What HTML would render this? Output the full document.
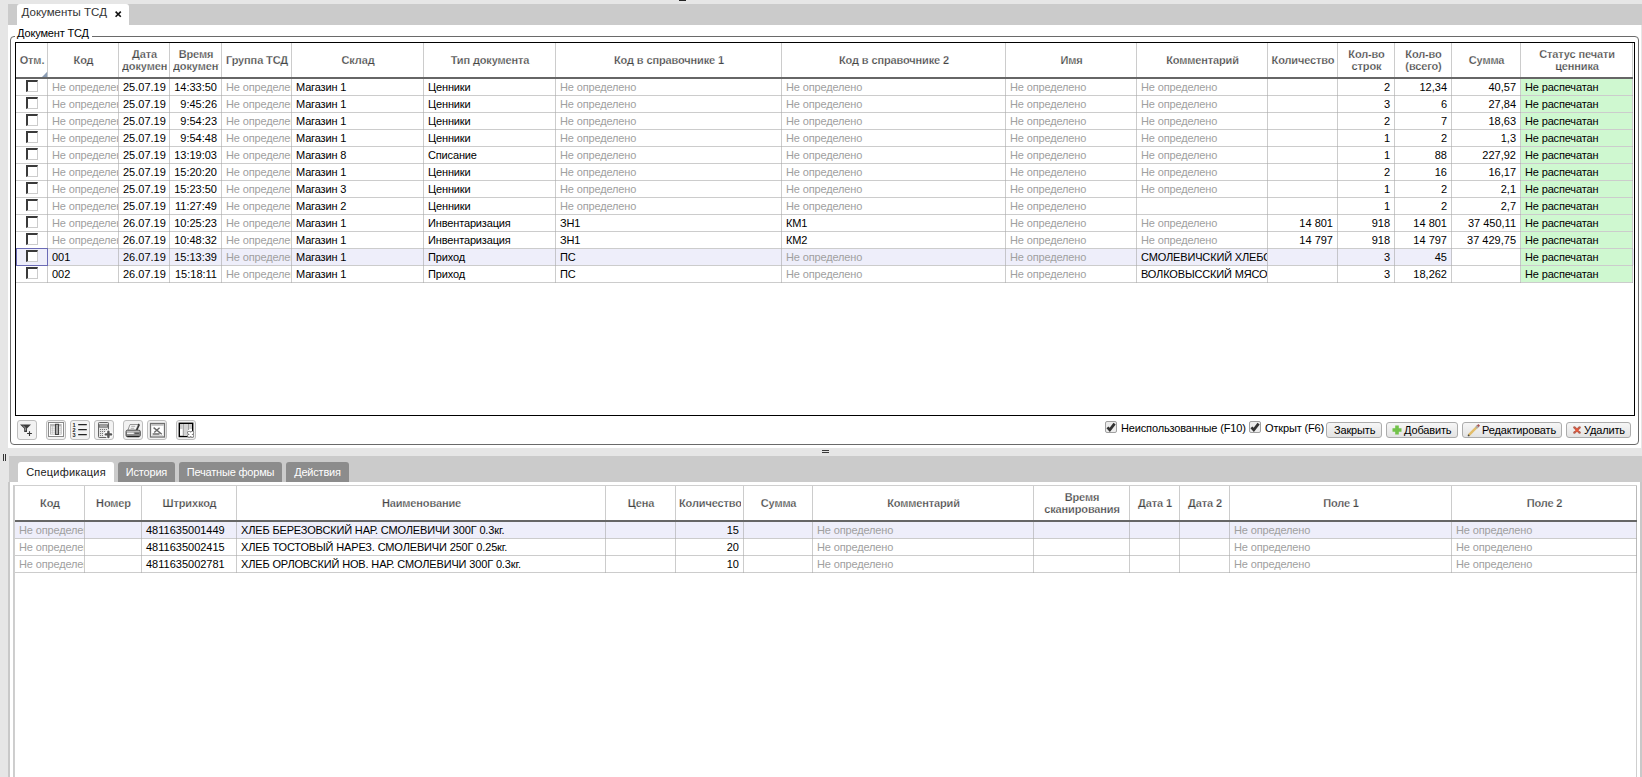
<!DOCTYPE html><html><head><meta charset="utf-8"><style>
*{box-sizing:content-box}
html,body{margin:0;padding:0}
body{width:1642px;height:777px;overflow:hidden;position:relative;background:#e6e6e6;font-family:"Liberation Sans",sans-serif;font-size:11px;color:#000;letter-spacing:-0.15px}
div{position:absolute}
.box{background:transparent}
.c{height:16px;line-height:16px;white-space:nowrap;overflow:hidden;padding:0 4px 0 4px;box-sizing:border-box;letter-spacing:-0.15px}
.c.r{text-align:right}
.hd{display:flex;align-items:center;justify-content:center;overflow:hidden}
.hdi{position:static;font-weight:bold;color:#444;-webkit-text-stroke:0.25px #fff;letter-spacing:-0.13px;text-align:center;line-height:12px;white-space:nowrap;margin-left:3px;margin-right:2px;overflow:hidden}
.hl1{position:static;overflow:hidden}
.chk{width:10px;height:10px;border-top:2px solid #3a3a3a;border-left:2px solid #3a3a3a;border-right:1px solid #ccc;border-bottom:1px solid #ccc;background:#fff;box-sizing:content-box;width:9px;height:9px}
.tbtn{width:18px;height:18px;border:1px solid #bdbdbd;border-radius:3px;background:#f2f2f2}
.btn{height:14px;border:1px solid #acacac;border-radius:3px;background:linear-gradient(#f6f6f6,#e3e3e3);line-height:14px;white-space:nowrap}
.tab2{height:20px;border-radius:3px 3px 0 0;background:#8c8c8c;color:#fff;line-height:20px;text-align:center;letter-spacing:-0.2px}
</style></head><body>
<div style="left:8px;top:4px;width:1634px;height:21px;background:#cbcbcb"></div>
<div style="left:679px;top:0;width:7px;height:1px;background:#222"></div>
<div style="left:17px;top:4px;width:112px;height:21px;background:#fff;border-radius:3px 3px 0 0"></div>
<div style="left:21.6px;top:4px;height:17px;line-height:17px;font-size:11.5px;color:#333;white-space:nowrap;letter-spacing:0">Документы ТСД</div>
<svg style="position:absolute;left:113px;top:9px" width="10" height="10" viewBox="0 0 10 10"><path d="M2.6 2.6L7.8 7.8M7.8 2.6L2.6 7.8" stroke="#111" stroke-width="1.6"/></svg>
<div style="left:8px;top:25px;width:1633px;height:423px;background:#fff"></div>
<div style="left:10px;top:36px;width:1627px;height:407px;border:1.5px solid #6a6a6a;border-radius:4px"></div>
<div style="left:15px;top:25px;height:16px;padding:0 3px 0 2px;background:#fff;line-height:16px;white-space:nowrap">Документ ТСД</div>
<div class="box" style="left:15px;top:42px;width:1618px;height:372px;border:1px solid #000"></div>
<div class="hl" style="left:1521px;top:79px;width:111px;height:16px;background:#cff8d0"></div>
<div class="hl" style="left:16px;top:95px;width:1617px;height:1px;background:rgba(170,170,170,0.6)"></div>
<div class="hl" style="left:1521px;top:96px;width:111px;height:16px;background:#cff8d0"></div>
<div class="hl" style="left:16px;top:112px;width:1617px;height:1px;background:rgba(170,170,170,0.6)"></div>
<div class="hl" style="left:1521px;top:113px;width:111px;height:16px;background:#cff8d0"></div>
<div class="hl" style="left:16px;top:129px;width:1617px;height:1px;background:rgba(170,170,170,0.6)"></div>
<div class="hl" style="left:1521px;top:130px;width:111px;height:16px;background:#cff8d0"></div>
<div class="hl" style="left:16px;top:146px;width:1617px;height:1px;background:rgba(170,170,170,0.6)"></div>
<div class="hl" style="left:1521px;top:147px;width:111px;height:16px;background:#cff8d0"></div>
<div class="hl" style="left:16px;top:163px;width:1617px;height:1px;background:rgba(170,170,170,0.6)"></div>
<div class="hl" style="left:1521px;top:164px;width:111px;height:16px;background:#cff8d0"></div>
<div class="hl" style="left:16px;top:180px;width:1617px;height:1px;background:rgba(170,170,170,0.6)"></div>
<div class="hl" style="left:1521px;top:181px;width:111px;height:16px;background:#cff8d0"></div>
<div class="hl" style="left:16px;top:197px;width:1617px;height:1px;background:rgba(170,170,170,0.6)"></div>
<div class="hl" style="left:1521px;top:198px;width:111px;height:16px;background:#cff8d0"></div>
<div class="hl" style="left:16px;top:214px;width:1617px;height:1px;background:rgba(170,170,170,0.6)"></div>
<div class="hl" style="left:1521px;top:215px;width:111px;height:16px;background:#cff8d0"></div>
<div class="hl" style="left:16px;top:231px;width:1617px;height:1px;background:rgba(170,170,170,0.6)"></div>
<div class="hl" style="left:1521px;top:232px;width:111px;height:16px;background:#cff8d0"></div>
<div class="hl" style="left:16px;top:248px;width:1617px;height:1px;background:rgba(170,170,170,0.6)"></div>
<div class="hl" style="left:16px;top:249px;width:1618px;height:16px;background:#eeeefa"></div>
<div class="hl" style="left:1452px;top:249px;width:68px;height:16px;background:#fff"></div>
<div class="hl" style="left:1521px;top:249px;width:111px;height:16px;background:#cff8d0"></div>
<div class="hl" style="left:16px;top:265px;width:1617px;height:1px;background:rgba(170,170,170,0.6)"></div>
<div class="hl" style="left:1521px;top:266px;width:111px;height:16px;background:#cff8d0"></div>
<div class="hl" style="left:16px;top:282px;width:1617px;height:1px;background:rgba(170,170,170,0.6)"></div>
<div class="hl" style="left:47px;top:43px;width:1px;height:240px;background:rgba(170,170,170,0.6)"></div>
<div class="hl" style="left:118px;top:43px;width:1px;height:240px;background:rgba(170,170,170,0.6)"></div>
<div class="hl" style="left:169px;top:43px;width:1px;height:240px;background:rgba(170,170,170,0.6)"></div>
<div class="hl" style="left:221px;top:43px;width:1px;height:240px;background:rgba(170,170,170,0.6)"></div>
<div class="hl" style="left:291px;top:43px;width:1px;height:240px;background:rgba(170,170,170,0.6)"></div>
<div class="hl" style="left:423px;top:43px;width:1px;height:240px;background:rgba(170,170,170,0.6)"></div>
<div class="hl" style="left:555px;top:43px;width:1px;height:240px;background:rgba(170,170,170,0.6)"></div>
<div class="hl" style="left:781px;top:43px;width:1px;height:240px;background:rgba(170,170,170,0.6)"></div>
<div class="hl" style="left:1005px;top:43px;width:1px;height:240px;background:rgba(170,170,170,0.6)"></div>
<div class="hl" style="left:1136px;top:43px;width:1px;height:240px;background:rgba(170,170,170,0.6)"></div>
<div class="hl" style="left:1267px;top:43px;width:1px;height:240px;background:rgba(170,170,170,0.6)"></div>
<div class="hl" style="left:1337px;top:43px;width:1px;height:240px;background:rgba(170,170,170,0.6)"></div>
<div class="hl" style="left:1394px;top:43px;width:1px;height:240px;background:rgba(170,170,170,0.6)"></div>
<div class="hl" style="left:1451px;top:43px;width:1px;height:240px;background:rgba(170,170,170,0.6)"></div>
<div class="hl" style="left:1520px;top:43px;width:1px;height:240px;background:rgba(170,170,170,0.6)"></div>
<div class="hl" style="left:1632px;top:43px;width:1px;height:240px;background:rgba(170,170,170,0.6)"></div>
<div class="hl" style="left:16px;top:77px;width:1617px;height:2px;background:#666"></div>
<div class="hd" style="left:16px;top:43px;width:31px;height:34px"><div class="hdi" style="width:26px"><div class="hl1">Отм.</div></div></div>
<div class="hd" style="left:48px;top:43px;width:70px;height:34px"><div class="hdi" style="width:65px"><div class="hl1">Код</div></div></div>
<div class="hd" style="left:119px;top:43px;width:50px;height:34px"><div class="hdi" style="width:45px"><div class="hl1">Дата</div><div class="hl1">документа</div></div></div>
<div class="hd" style="left:170px;top:43px;width:51px;height:34px"><div class="hdi" style="width:46px"><div class="hl1">Время</div><div class="hl1">документа</div></div></div>
<div class="hd" style="left:222px;top:43px;width:69px;height:34px"><div class="hdi" style="width:64px"><div class="hl1">Группа ТСД</div></div></div>
<div class="hd" style="left:292px;top:43px;width:131px;height:34px"><div class="hdi" style="width:126px"><div class="hl1">Склад</div></div></div>
<div class="hd" style="left:424px;top:43px;width:131px;height:34px"><div class="hdi" style="width:126px"><div class="hl1">Тип документа</div></div></div>
<div class="hd" style="left:556px;top:43px;width:225px;height:34px"><div class="hdi" style="width:220px"><div class="hl1">Код в справочнике 1</div></div></div>
<div class="hd" style="left:782px;top:43px;width:223px;height:34px"><div class="hdi" style="width:218px"><div class="hl1">Код в справочнике 2</div></div></div>
<div class="hd" style="left:1006px;top:43px;width:130px;height:34px"><div class="hdi" style="width:125px"><div class="hl1">Имя</div></div></div>
<div class="hd" style="left:1137px;top:43px;width:130px;height:34px"><div class="hdi" style="width:125px"><div class="hl1">Комментарий</div></div></div>
<div class="hd" style="left:1268px;top:43px;width:69px;height:34px"><div class="hdi" style="width:64px"><div class="hl1">Количество</div></div></div>
<div class="hd" style="left:1338px;top:43px;width:56px;height:34px"><div class="hdi" style="width:51px"><div class="hl1">Кол-во</div><div class="hl1">строк</div></div></div>
<div class="hd" style="left:1395px;top:43px;width:56px;height:34px"><div class="hdi" style="width:51px"><div class="hl1">Кол-во</div><div class="hl1">(всего)</div></div></div>
<div class="hd" style="left:1452px;top:43px;width:68px;height:34px"><div class="hdi" style="width:63px"><div class="hl1">Сумма</div></div></div>
<div class="hd" style="left:1521px;top:43px;width:111px;height:34px"><div class="hdi" style="width:106px"><div class="hl1">Статус печати</div><div class="hl1">ценника</div></div></div>
<div class="chk" style="left:26px;top:80px"></div>
<div class="c" style="left:48px;top:79px;width:70px;color:#a0a0a0">Не определено</div>
<div class="c" style="left:119px;top:79px;width:50px;letter-spacing:0">25.07.19</div>
<div class="c r" style="left:170px;top:79px;width:51px;letter-spacing:0">14:33:50</div>
<div class="c" style="left:222px;top:79px;width:69px;color:#a0a0a0">Не определено</div>
<div class="c" style="left:292px;top:79px;width:131px">Магазин 1</div>
<div class="c" style="left:424px;top:79px;width:131px">Ценники</div>
<div class="c" style="left:556px;top:79px;width:225px;color:#a0a0a0">Не определено</div>
<div class="c" style="left:782px;top:79px;width:223px;color:#a0a0a0">Не определено</div>
<div class="c" style="left:1006px;top:79px;width:130px;color:#a0a0a0">Не определено</div>
<div class="c" style="left:1137px;top:79px;width:130px;color:#a0a0a0">Не определено</div>
<div class="c r" style="left:1338px;top:79px;width:56px;letter-spacing:0">2</div>
<div class="c r" style="left:1395px;top:79px;width:56px;letter-spacing:0">12,34</div>
<div class="c r" style="left:1452px;top:79px;width:68px;letter-spacing:0">40,57</div>
<div class="c" style="left:1521px;top:79px;width:111px">Не распечатан</div>
<div class="chk" style="left:26px;top:97px"></div>
<div class="c" style="left:48px;top:96px;width:70px;color:#a0a0a0">Не определено</div>
<div class="c" style="left:119px;top:96px;width:50px;letter-spacing:0">25.07.19</div>
<div class="c r" style="left:170px;top:96px;width:51px;letter-spacing:0">9:45:26</div>
<div class="c" style="left:222px;top:96px;width:69px;color:#a0a0a0">Не определено</div>
<div class="c" style="left:292px;top:96px;width:131px">Магазин 1</div>
<div class="c" style="left:424px;top:96px;width:131px">Ценники</div>
<div class="c" style="left:556px;top:96px;width:225px;color:#a0a0a0">Не определено</div>
<div class="c" style="left:782px;top:96px;width:223px;color:#a0a0a0">Не определено</div>
<div class="c" style="left:1006px;top:96px;width:130px;color:#a0a0a0">Не определено</div>
<div class="c" style="left:1137px;top:96px;width:130px;color:#a0a0a0">Не определено</div>
<div class="c r" style="left:1338px;top:96px;width:56px;letter-spacing:0">3</div>
<div class="c r" style="left:1395px;top:96px;width:56px;letter-spacing:0">6</div>
<div class="c r" style="left:1452px;top:96px;width:68px;letter-spacing:0">27,84</div>
<div class="c" style="left:1521px;top:96px;width:111px">Не распечатан</div>
<div class="chk" style="left:26px;top:114px"></div>
<div class="c" style="left:48px;top:113px;width:70px;color:#a0a0a0">Не определено</div>
<div class="c" style="left:119px;top:113px;width:50px;letter-spacing:0">25.07.19</div>
<div class="c r" style="left:170px;top:113px;width:51px;letter-spacing:0">9:54:23</div>
<div class="c" style="left:222px;top:113px;width:69px;color:#a0a0a0">Не определено</div>
<div class="c" style="left:292px;top:113px;width:131px">Магазин 1</div>
<div class="c" style="left:424px;top:113px;width:131px">Ценники</div>
<div class="c" style="left:556px;top:113px;width:225px;color:#a0a0a0">Не определено</div>
<div class="c" style="left:782px;top:113px;width:223px;color:#a0a0a0">Не определено</div>
<div class="c" style="left:1006px;top:113px;width:130px;color:#a0a0a0">Не определено</div>
<div class="c" style="left:1137px;top:113px;width:130px;color:#a0a0a0">Не определено</div>
<div class="c r" style="left:1338px;top:113px;width:56px;letter-spacing:0">2</div>
<div class="c r" style="left:1395px;top:113px;width:56px;letter-spacing:0">7</div>
<div class="c r" style="left:1452px;top:113px;width:68px;letter-spacing:0">18,63</div>
<div class="c" style="left:1521px;top:113px;width:111px">Не распечатан</div>
<div class="chk" style="left:26px;top:131px"></div>
<div class="c" style="left:48px;top:130px;width:70px;color:#a0a0a0">Не определено</div>
<div class="c" style="left:119px;top:130px;width:50px;letter-spacing:0">25.07.19</div>
<div class="c r" style="left:170px;top:130px;width:51px;letter-spacing:0">9:54:48</div>
<div class="c" style="left:222px;top:130px;width:69px;color:#a0a0a0">Не определено</div>
<div class="c" style="left:292px;top:130px;width:131px">Магазин 1</div>
<div class="c" style="left:424px;top:130px;width:131px">Ценники</div>
<div class="c" style="left:556px;top:130px;width:225px;color:#a0a0a0">Не определено</div>
<div class="c" style="left:782px;top:130px;width:223px;color:#a0a0a0">Не определено</div>
<div class="c" style="left:1006px;top:130px;width:130px;color:#a0a0a0">Не определено</div>
<div class="c" style="left:1137px;top:130px;width:130px;color:#a0a0a0">Не определено</div>
<div class="c r" style="left:1338px;top:130px;width:56px;letter-spacing:0">1</div>
<div class="c r" style="left:1395px;top:130px;width:56px;letter-spacing:0">2</div>
<div class="c r" style="left:1452px;top:130px;width:68px;letter-spacing:0">1,3</div>
<div class="c" style="left:1521px;top:130px;width:111px">Не распечатан</div>
<div class="chk" style="left:26px;top:148px"></div>
<div class="c" style="left:48px;top:147px;width:70px;color:#a0a0a0">Не определено</div>
<div class="c" style="left:119px;top:147px;width:50px;letter-spacing:0">25.07.19</div>
<div class="c r" style="left:170px;top:147px;width:51px;letter-spacing:0">13:19:03</div>
<div class="c" style="left:222px;top:147px;width:69px;color:#a0a0a0">Не определено</div>
<div class="c" style="left:292px;top:147px;width:131px">Магазин 8</div>
<div class="c" style="left:424px;top:147px;width:131px">Списание</div>
<div class="c" style="left:556px;top:147px;width:225px;color:#a0a0a0">Не определено</div>
<div class="c" style="left:782px;top:147px;width:223px;color:#a0a0a0">Не определено</div>
<div class="c" style="left:1006px;top:147px;width:130px;color:#a0a0a0">Не определено</div>
<div class="c" style="left:1137px;top:147px;width:130px;color:#a0a0a0">Не определено</div>
<div class="c r" style="left:1338px;top:147px;width:56px;letter-spacing:0">1</div>
<div class="c r" style="left:1395px;top:147px;width:56px;letter-spacing:0">88</div>
<div class="c r" style="left:1452px;top:147px;width:68px;letter-spacing:0">227,92</div>
<div class="c" style="left:1521px;top:147px;width:111px">Не распечатан</div>
<div class="chk" style="left:26px;top:165px"></div>
<div class="c" style="left:48px;top:164px;width:70px;color:#a0a0a0">Не определено</div>
<div class="c" style="left:119px;top:164px;width:50px;letter-spacing:0">25.07.19</div>
<div class="c r" style="left:170px;top:164px;width:51px;letter-spacing:0">15:20:20</div>
<div class="c" style="left:222px;top:164px;width:69px;color:#a0a0a0">Не определено</div>
<div class="c" style="left:292px;top:164px;width:131px">Магазин 1</div>
<div class="c" style="left:424px;top:164px;width:131px">Ценники</div>
<div class="c" style="left:556px;top:164px;width:225px;color:#a0a0a0">Не определено</div>
<div class="c" style="left:782px;top:164px;width:223px;color:#a0a0a0">Не определено</div>
<div class="c" style="left:1006px;top:164px;width:130px;color:#a0a0a0">Не определено</div>
<div class="c" style="left:1137px;top:164px;width:130px;color:#a0a0a0">Не определено</div>
<div class="c r" style="left:1338px;top:164px;width:56px;letter-spacing:0">2</div>
<div class="c r" style="left:1395px;top:164px;width:56px;letter-spacing:0">16</div>
<div class="c r" style="left:1452px;top:164px;width:68px;letter-spacing:0">16,17</div>
<div class="c" style="left:1521px;top:164px;width:111px">Не распечатан</div>
<div class="chk" style="left:26px;top:182px"></div>
<div class="c" style="left:48px;top:181px;width:70px;color:#a0a0a0">Не определено</div>
<div class="c" style="left:119px;top:181px;width:50px;letter-spacing:0">25.07.19</div>
<div class="c r" style="left:170px;top:181px;width:51px;letter-spacing:0">15:23:50</div>
<div class="c" style="left:222px;top:181px;width:69px;color:#a0a0a0">Не определено</div>
<div class="c" style="left:292px;top:181px;width:131px">Магазин 3</div>
<div class="c" style="left:424px;top:181px;width:131px">Ценники</div>
<div class="c" style="left:556px;top:181px;width:225px;color:#a0a0a0">Не определено</div>
<div class="c" style="left:782px;top:181px;width:223px;color:#a0a0a0">Не определено</div>
<div class="c" style="left:1006px;top:181px;width:130px;color:#a0a0a0">Не определено</div>
<div class="c" style="left:1137px;top:181px;width:130px;color:#a0a0a0">Не определено</div>
<div class="c r" style="left:1338px;top:181px;width:56px;letter-spacing:0">1</div>
<div class="c r" style="left:1395px;top:181px;width:56px;letter-spacing:0">2</div>
<div class="c r" style="left:1452px;top:181px;width:68px;letter-spacing:0">2,1</div>
<div class="c" style="left:1521px;top:181px;width:111px">Не распечатан</div>
<div class="chk" style="left:26px;top:199px"></div>
<div class="c" style="left:48px;top:198px;width:70px;color:#a0a0a0">Не определено</div>
<div class="c" style="left:119px;top:198px;width:50px;letter-spacing:0">25.07.19</div>
<div class="c r" style="left:170px;top:198px;width:51px;letter-spacing:0">11:27:49</div>
<div class="c" style="left:222px;top:198px;width:69px;color:#a0a0a0">Не определено</div>
<div class="c" style="left:292px;top:198px;width:131px">Магазин 2</div>
<div class="c" style="left:424px;top:198px;width:131px">Ценники</div>
<div class="c" style="left:556px;top:198px;width:225px;color:#a0a0a0">Не определено</div>
<div class="c" style="left:782px;top:198px;width:223px;color:#a0a0a0">Не определено</div>
<div class="c" style="left:1006px;top:198px;width:130px;color:#a0a0a0">Не определено</div>
<div class="c r" style="left:1338px;top:198px;width:56px;letter-spacing:0">1</div>
<div class="c r" style="left:1395px;top:198px;width:56px;letter-spacing:0">2</div>
<div class="c r" style="left:1452px;top:198px;width:68px;letter-spacing:0">2,7</div>
<div class="c" style="left:1521px;top:198px;width:111px">Не распечатан</div>
<div class="chk" style="left:26px;top:216px"></div>
<div class="c" style="left:48px;top:215px;width:70px;color:#a0a0a0">Не определено</div>
<div class="c" style="left:119px;top:215px;width:50px;letter-spacing:0">26.07.19</div>
<div class="c r" style="left:170px;top:215px;width:51px;letter-spacing:0">10:25:23</div>
<div class="c" style="left:222px;top:215px;width:69px;color:#a0a0a0">Не определено</div>
<div class="c" style="left:292px;top:215px;width:131px">Магазин 1</div>
<div class="c" style="left:424px;top:215px;width:131px">Инвентаризация</div>
<div class="c" style="left:556px;top:215px;width:225px">ЗН1</div>
<div class="c" style="left:782px;top:215px;width:223px">КМ1</div>
<div class="c" style="left:1006px;top:215px;width:130px;color:#a0a0a0">Не определено</div>
<div class="c" style="left:1137px;top:215px;width:130px;color:#a0a0a0">Не определено</div>
<div class="c r" style="left:1268px;top:215px;width:69px;letter-spacing:0">14 801</div>
<div class="c r" style="left:1338px;top:215px;width:56px;letter-spacing:0">918</div>
<div class="c r" style="left:1395px;top:215px;width:56px;letter-spacing:0">14 801</div>
<div class="c r" style="left:1452px;top:215px;width:68px;letter-spacing:0">37 450,11</div>
<div class="c" style="left:1521px;top:215px;width:111px">Не распечатан</div>
<div class="chk" style="left:26px;top:233px"></div>
<div class="c" style="left:48px;top:232px;width:70px;color:#a0a0a0">Не определено</div>
<div class="c" style="left:119px;top:232px;width:50px;letter-spacing:0">26.07.19</div>
<div class="c r" style="left:170px;top:232px;width:51px;letter-spacing:0">10:48:32</div>
<div class="c" style="left:222px;top:232px;width:69px;color:#a0a0a0">Не определено</div>
<div class="c" style="left:292px;top:232px;width:131px">Магазин 1</div>
<div class="c" style="left:424px;top:232px;width:131px">Инвентаризация</div>
<div class="c" style="left:556px;top:232px;width:225px">ЗН1</div>
<div class="c" style="left:782px;top:232px;width:223px">КМ2</div>
<div class="c" style="left:1006px;top:232px;width:130px;color:#a0a0a0">Не определено</div>
<div class="c" style="left:1137px;top:232px;width:130px;color:#a0a0a0">Не определено</div>
<div class="c r" style="left:1268px;top:232px;width:69px;letter-spacing:0">14 797</div>
<div class="c r" style="left:1338px;top:232px;width:56px;letter-spacing:0">918</div>
<div class="c r" style="left:1395px;top:232px;width:56px;letter-spacing:0">14 797</div>
<div class="c r" style="left:1452px;top:232px;width:68px;letter-spacing:0">37 429,75</div>
<div class="c" style="left:1521px;top:232px;width:111px">Не распечатан</div>
<div class="chk" style="left:26px;top:250px"></div>
<div class="c" style="left:48px;top:249px;width:70px;letter-spacing:0">001</div>
<div class="c" style="left:119px;top:249px;width:50px;letter-spacing:0">26.07.19</div>
<div class="c r" style="left:170px;top:249px;width:51px;letter-spacing:0">15:13:39</div>
<div class="c" style="left:222px;top:249px;width:69px;color:#a0a0a0">Не определено</div>
<div class="c" style="left:292px;top:249px;width:131px">Магазин 1</div>
<div class="c" style="left:424px;top:249px;width:131px">Приход</div>
<div class="c" style="left:556px;top:249px;width:225px">ПС</div>
<div class="c" style="left:782px;top:249px;width:223px;color:#a0a0a0">Не определено</div>
<div class="c" style="left:1006px;top:249px;width:130px;color:#a0a0a0">Не определено</div>
<div class="c" style="left:1137px;top:249px;width:130px">СМОЛЕВИЧСКИЙ ХЛЕБОЗАВОД</div>
<div class="c r" style="left:1338px;top:249px;width:56px;letter-spacing:0">3</div>
<div class="c r" style="left:1395px;top:249px;width:56px;letter-spacing:0">45</div>
<div class="c" style="left:1521px;top:249px;width:111px">Не распечатан</div>
<div class="chk" style="left:26px;top:267px"></div>
<div class="c" style="left:48px;top:266px;width:70px;letter-spacing:0">002</div>
<div class="c" style="left:119px;top:266px;width:50px;letter-spacing:0">26.07.19</div>
<div class="c r" style="left:170px;top:266px;width:51px;letter-spacing:0">15:18:11</div>
<div class="c" style="left:222px;top:266px;width:69px;color:#a0a0a0">Не определено</div>
<div class="c" style="left:292px;top:266px;width:131px">Магазин 1</div>
<div class="c" style="left:424px;top:266px;width:131px">Приход</div>
<div class="c" style="left:556px;top:266px;width:225px">ПС</div>
<div class="c" style="left:782px;top:266px;width:223px;color:#a0a0a0">Не определено</div>
<div class="c" style="left:1006px;top:266px;width:130px;color:#a0a0a0">Не определено</div>
<div class="c" style="left:1137px;top:266px;width:130px">ВОЛКОВЫССКИЙ МЯСОКОМБИНАТ</div>
<div class="c r" style="left:1338px;top:266px;width:56px;letter-spacing:0">3</div>
<div class="c r" style="left:1395px;top:266px;width:56px;letter-spacing:0">18,262</div>
<div class="c" style="left:1521px;top:266px;width:111px">Не распечатан</div>
<svg style="position:absolute;left:41px;top:71px" width="7" height="7" viewBox="0 0 7 7"><path d="M1 6H6.2V0.8Z" fill="#8b9db5"/></svg>
<div style="left:16px;top:248px;width:30px;height:16px;border:1px solid #6b6bb5"></div>
<div class="tbtn" style="left:17px;top:420px"></div>
<svg style="position:absolute;left:17px;top:420px" width="20" height="20" viewBox="0 0 20 20"><path d="M3 4.5H14L10 8.5V12H7.2V8.5Z" fill="#3c3c3c"/><path d="M6.2 5.6L8.6 8.2V10.6" stroke="#bbb" stroke-width="0.8" fill="none"/><path d="M12.5 11.2V16M10.1 13.5H14.9" stroke="#333" stroke-width="1.1"/></svg>
<div class="tbtn" style="left:46px;top:420px"></div>
<svg style="position:absolute;left:46px;top:420px" width="20" height="20" viewBox="0 0 20 20"><rect x="2.5" y="2.5" width="15" height="14" fill="#fff" stroke="#8a8a8a" stroke-width="1"/><rect x="4" y="4" width="11.7" height="10.6" fill="#b8b8b8"/><g fill="#fff"><rect x="5" y="6.5" width="1.5" height="1.2"/><rect x="7" y="6.5" width="1.8" height="1.2"/><rect x="13" y="6.5" width="1.8" height="1.2"/><rect x="5" y="8.5" width="1.5" height="1.2"/><rect x="7" y="8.5" width="1.8" height="1.2"/><rect x="13" y="8.5" width="1.8" height="1.2"/><rect x="5" y="10.5" width="1.5" height="1.2"/><rect x="7" y="10.5" width="1.8" height="1.2"/><rect x="13" y="10.5" width="1.8" height="1.2"/><rect x="5" y="12.5" width="1.5" height="1.2"/><rect x="7" y="12.5" width="1.8" height="1.2"/><rect x="13" y="12.5" width="1.8" height="1.2"/></g><rect x="9.5" y="4.3" width="3" height="10.2" fill="#aaa" stroke="#444" stroke-width="1"/></svg>
<div class="tbtn" style="left:70px;top:420px"></div>
<svg style="position:absolute;left:70px;top:420px" width="20" height="20" viewBox="0 0 20 20"><g font-family="Liberation Sans" font-weight="bold" font-size="5.6" fill="#222"><text x="2.6" y="7">1</text><text x="2.6" y="12">2</text><text x="2.6" y="17">3</text></g><path d="M8.2 4.6H16.8M8.2 9.6H16.8M8.2 14.6H16.8" stroke="#222" stroke-width="1.1"/></svg>
<div class="tbtn" style="left:94px;top:420px"></div>
<svg style="position:absolute;left:94px;top:420px" width="20" height="20" viewBox="0 0 20 20"><rect x="4.5" y="2.5" width="10" height="15" rx="0.8" fill="#e6e6e6" stroke="#666" stroke-width="1"/><rect x="5" y="4.3" width="9" height="3.4" fill="#777"/><rect x="5.8" y="5.2" width="7.2" height="1.6" fill="#aaa"/><g fill="#666"><circle cx="6.5" cy="9.5" r="0.6"/><circle cx="8.5" cy="9.5" r="0.6"/><circle cx="10.5" cy="9.5" r="0.6"/><circle cx="12.5" cy="9.5" r="0.6"/><circle cx="6.5" cy="11.5" r="0.6"/><circle cx="8.5" cy="11.5" r="0.6"/><circle cx="10.5" cy="11.5" r="0.6"/><circle cx="6.5" cy="13.5" r="0.6"/><circle cx="8.5" cy="13.5" r="0.6"/><circle cx="6.5" cy="15.5" r="0.6"/><circle cx="8.5" cy="15.5" r="0.6"/></g><path d="M14.4 11.3V17.4M11.4 14.4H17.4" stroke="#fff" stroke-width="4.2" stroke-linecap="round"/><path d="M14.4 11.6V17.1M11.7 14.4H17.1" stroke="#555" stroke-width="2.4" stroke-linecap="round"/></svg>
<div class="tbtn" style="left:123px;top:420px"></div>
<svg style="position:absolute;left:123px;top:420px" width="20" height="20" viewBox="0 0 20 20"><path d="M7 4.5H15.2L13 10.3H4.8Z" fill="#f6f6f6" stroke="#8a8a8a" stroke-width="0.9"/><path d="M15.3 4L16.1 5L13.6 10.4" stroke="#333" stroke-width="1.4" fill="none"/><path d="M8.2 6.3H12.2M7.7 8.3H11.2" stroke="#999" stroke-width="0.8"/><path d="M3 11.5Q3 10.2 4.5 10.2H16Q17.3 10.2 17.3 11.6V15.3Q17.3 16.8 15.8 16.8H4.6Q3 16.8 3 15.3Z" fill="#8c8c8c" stroke="#4a4a4a" stroke-width="0.9"/><path d="M3.8 11.3H16.4" stroke="#cfcfcf" stroke-width="0.9"/><path d="M4 13.3H10.8" stroke="#f4f4f4" stroke-width="1.5"/><path d="M12 13.4H16" stroke="#5a5a5a" stroke-width="1.2"/><path d="M4.3 16.5H15.9" stroke="#222" stroke-width="1.1"/></svg>
<div class="tbtn" style="left:147px;top:420px"></div>
<svg style="position:absolute;left:147px;top:420px" width="20" height="20" viewBox="0 0 20 20"><rect x="3.5" y="3.5" width="14" height="13.5" fill="#fff" stroke="#707070" stroke-width="1.3"/><path d="M4.5 5H16.5" stroke="#999" stroke-width="1"/><path d="M6.6 7.6L14.8 14.2M12.6 7.8L7.2 12.6M5.6 14H12.5" stroke="#6a6a6a" stroke-width="1.4"/><path d="M5 15.5H16" stroke="#ccc" stroke-width="0.8"/></svg>
<div class="tbtn" style="left:176px;top:420px"></div>
<svg style="position:absolute;left:176px;top:420px" width="20" height="20" viewBox="0 0 20 20"><rect x="3.3" y="3.3" width="13.4" height="13.2" fill="#fff" stroke="#000" stroke-width="1.4"/><rect x="4" y="4" width="2.5" height="5" fill="#ccc"/><rect x="8" y="4" width="4" height="12" fill="#d4d4d4"/><rect x="13.3" y="4" width="2.7" height="5" fill="#ccc"/><path d="M7.3 4V16M12.6 4V10" stroke="#888" stroke-width="0.9"/><path d="M13.1 12.7L16.2 15.8M16.2 12.7L13.1 15.8" stroke="#7a7a7a" stroke-width="3.9" stroke-linecap="round"/><path d="M13.1 12.7L16.2 15.8M16.2 12.7L13.1 15.8" stroke="#fff" stroke-width="2.3" stroke-linecap="round"/></svg>
<div style="left:1105px;top:421px;width:10px;height:10px;border:1px solid #a0a0a0;border-radius:2px;background:#ececec"></div><svg style="position:absolute;left:1105px;top:421px" width="12" height="12" viewBox="0 0 12 12"><path d="M2.4 6.3L4.8 8.9L9.6 2.6" stroke="#333" stroke-width="2.7" fill="none"/></svg>
<div style="left:1121px;top:420px;line-height:16px;white-space:nowrap">Неиспользованные (F10)</div>
<div style="left:1249px;top:421px;width:10px;height:10px;border:1px solid #a0a0a0;border-radius:2px;background:#ececec"></div><svg style="position:absolute;left:1249px;top:421px" width="12" height="12" viewBox="0 0 12 12"><path d="M2.4 6.3L4.8 8.9L9.6 2.6" stroke="#333" stroke-width="2.7" fill="none"/></svg>
<div style="left:1265px;top:420px;line-height:16px;white-space:nowrap">Открыт (F6)</div>
<div class="btn" style="left:1326px;top:422px;width:54px"></div>
<div style="left:1334px;top:422px;line-height:16px">Закрыть</div>
<div class="btn" style="left:1386px;top:422px;width:70px"></div>
<div style="left:1404px;top:422px;line-height:16px">Добавить</div>
<svg style="position:absolute;left:1392px;top:425px" width="10" height="10" viewBox="0 0 10 10"><path d="M5 0.5V9.5M0.5 5H9.5" stroke="#72c24a" stroke-width="3.6"/></svg>
<div class="btn" style="left:1462px;top:422px;width:98px"></div>
<div style="left:1482px;top:422px;line-height:16px">Редактировать</div>
<svg style="position:absolute;left:1467px;top:424px" width="14" height="13" viewBox="0 0 14 13"><path d="M1.6 11.3L10.5 2.4" stroke="#e2bd6a" stroke-width="2.4"/><path d="M10.3 2.6L12.2 0.9" stroke="#a85050" stroke-width="2.4"/><path d="M9.2 3.8L10.8 2.2" stroke="#aaa" stroke-width="2.4"/><circle cx="1.6" cy="11.4" r="0.9" fill="#444"/></svg>
<div class="btn" style="left:1566px;top:422px;width:63px"></div>
<div style="left:1584px;top:422px;line-height:16px">Удалить</div>
<svg style="position:absolute;left:1573px;top:426px" width="8" height="8" viewBox="0 0 8 8"><path d="M1.4 1.4L6.6 6.6M6.6 1.4L1.4 6.6" stroke="#b86050" stroke-width="2.4" stroke-linecap="round"/><circle cx="4" cy="4" r="1.9" fill="#e8573a"/></svg>
<div style="left:9px;top:448px;width:1633px;height:8px;background:#e6e6e6"></div>
<div style="left:822px;top:450px;width:7px;height:1px;background:#3a3a3a"></div>
<div style="left:822px;top:452px;width:7px;height:1px;background:#3a3a3a"></div>
<div style="left:3px;top:454px;width:1px;height:7px;background:#333"></div>
<div style="left:5px;top:454px;width:1px;height:7px;background:#333"></div>
<div style="left:9px;top:456px;width:1633px;height:26px;background:#cbcbcb"></div>
<div style="left:18px;top:462px;width:96px;height:20px;background:#fff;border-radius:3px 3px 0 0;color:#222;line-height:20px;text-align:center;letter-spacing:0.2px">Спецификация</div>
<div class="tab2" style="left:118px;top:462px;width:57px">История</div>
<div class="tab2" style="left:179px;top:462px;width:103px">Печатные формы</div>
<div class="tab2" style="left:286px;top:462px;width:63px">Действия</div>
<div style="left:8px;top:482px;width:1634px;height:295px;background:#c8c8c8"></div>
<div style="left:10px;top:482px;width:1630px;height:295px;background:#fff"></div>
<div style="left:13px;top:485px;width:1px;height:292px;background:#cdcdcd"></div>
<div class="box" style="left:14px;top:485px;width:1621px;height:292px;border:1px solid #cfcfcf"></div>
<div class="hl" style="left:15px;top:522px;width:1621px;height:16px;background:#eeeefa"></div>
<div class="hl" style="left:15px;top:538px;width:1622px;height:1px;background:rgba(170,170,170,0.6)"></div>
<div class="hl" style="left:15px;top:555px;width:1622px;height:1px;background:rgba(170,170,170,0.6)"></div>
<div class="hl" style="left:15px;top:572px;width:1622px;height:1px;background:rgba(170,170,170,0.6)"></div>
<div class="hl" style="left:84px;top:486px;width:1px;height:87px;background:rgba(170,170,170,0.6)"></div>
<div class="hl" style="left:141px;top:486px;width:1px;height:87px;background:rgba(170,170,170,0.6)"></div>
<div class="hl" style="left:236px;top:486px;width:1px;height:87px;background:rgba(170,170,170,0.6)"></div>
<div class="hl" style="left:605px;top:486px;width:1px;height:87px;background:rgba(170,170,170,0.6)"></div>
<div class="hl" style="left:675px;top:486px;width:1px;height:87px;background:rgba(170,170,170,0.6)"></div>
<div class="hl" style="left:743px;top:486px;width:1px;height:87px;background:rgba(170,170,170,0.6)"></div>
<div class="hl" style="left:812px;top:486px;width:1px;height:87px;background:rgba(170,170,170,0.6)"></div>
<div class="hl" style="left:1033px;top:486px;width:1px;height:87px;background:rgba(170,170,170,0.6)"></div>
<div class="hl" style="left:1129px;top:486px;width:1px;height:87px;background:rgba(170,170,170,0.6)"></div>
<div class="hl" style="left:1179px;top:486px;width:1px;height:87px;background:rgba(170,170,170,0.6)"></div>
<div class="hl" style="left:1229px;top:486px;width:1px;height:87px;background:rgba(170,170,170,0.6)"></div>
<div class="hl" style="left:1451px;top:486px;width:1px;height:87px;background:rgba(170,170,170,0.6)"></div>
<div class="hl" style="left:1636px;top:486px;width:1px;height:87px;background:rgba(170,170,170,0.6)"></div>
<div class="hl" style="left:15px;top:520px;width:1622px;height:2px;background:#666"></div>
<div class="hd" style="left:15px;top:486px;width:69px;height:34px"><div class="hdi" style="width:64px"><div class="hl1">Код</div></div></div>
<div class="hd" style="left:85px;top:486px;width:56px;height:34px"><div class="hdi" style="width:51px"><div class="hl1">Номер</div></div></div>
<div class="hd" style="left:142px;top:486px;width:94px;height:34px"><div class="hdi" style="width:89px"><div class="hl1">Штрихкод</div></div></div>
<div class="hd" style="left:237px;top:486px;width:368px;height:34px"><div class="hdi" style="width:363px"><div class="hl1">Наименование</div></div></div>
<div class="hd" style="left:606px;top:486px;width:69px;height:34px"><div class="hdi" style="width:64px"><div class="hl1">Цена</div></div></div>
<div class="hd" style="left:676px;top:486px;width:67px;height:34px"><div class="hdi" style="width:62px"><div class="hl1">Количество</div></div></div>
<div class="hd" style="left:744px;top:486px;width:68px;height:34px"><div class="hdi" style="width:63px"><div class="hl1">Сумма</div></div></div>
<div class="hd" style="left:813px;top:486px;width:220px;height:34px"><div class="hdi" style="width:215px"><div class="hl1">Комментарий</div></div></div>
<div class="hd" style="left:1034px;top:486px;width:95px;height:34px"><div class="hdi" style="width:90px"><div class="hl1">Время</div><div class="hl1">сканирования</div></div></div>
<div class="hd" style="left:1130px;top:486px;width:49px;height:34px"><div class="hdi" style="width:44px"><div class="hl1">Дата 1</div></div></div>
<div class="hd" style="left:1180px;top:486px;width:49px;height:34px"><div class="hdi" style="width:44px"><div class="hl1">Дата 2</div></div></div>
<div class="hd" style="left:1230px;top:486px;width:221px;height:34px"><div class="hdi" style="width:216px"><div class="hl1">Поле 1</div></div></div>
<div class="hd" style="left:1452px;top:486px;width:184px;height:34px"><div class="hdi" style="width:179px"><div class="hl1">Поле 2</div></div></div>
<div class="c" style="left:15px;top:522px;width:69px;color:#a0a0a0">Не определено</div>
<div class="c" style="left:142px;top:522px;width:94px;letter-spacing:0">4811635001449</div>
<div class="c" style="left:237px;top:522px;width:368px">ХЛЕБ БЕРЕЗОВСКИЙ НАР. СМОЛЕВИЧИ 300Г 0.3кг.</div>
<div class="c r" style="left:676px;top:522px;width:67px;letter-spacing:0">15</div>
<div class="c" style="left:813px;top:522px;width:220px;color:#a0a0a0">Не определено</div>
<div class="c" style="left:1230px;top:522px;width:221px;color:#a0a0a0">Не определено</div>
<div class="c" style="left:1452px;top:522px;width:184px;color:#a0a0a0">Не определено</div>
<div class="c" style="left:15px;top:539px;width:69px;color:#a0a0a0">Не определено</div>
<div class="c" style="left:142px;top:539px;width:94px;letter-spacing:0">4811635002415</div>
<div class="c" style="left:237px;top:539px;width:368px">ХЛЕБ ТОСТОВЫЙ НАРЕЗ. СМОЛЕВИЧИ 250Г 0.25кг.</div>
<div class="c r" style="left:676px;top:539px;width:67px;letter-spacing:0">20</div>
<div class="c" style="left:813px;top:539px;width:220px;color:#a0a0a0">Не определено</div>
<div class="c" style="left:1230px;top:539px;width:221px;color:#a0a0a0">Не определено</div>
<div class="c" style="left:1452px;top:539px;width:184px;color:#a0a0a0">Не определено</div>
<div class="c" style="left:15px;top:556px;width:69px;color:#a0a0a0">Не определено</div>
<div class="c" style="left:142px;top:556px;width:94px;letter-spacing:0">4811635002781</div>
<div class="c" style="left:237px;top:556px;width:368px">ХЛЕБ ОРЛОВСКИЙ НОВ. НАР. СМОЛЕВИЧИ 300Г 0.3кг.</div>
<div class="c r" style="left:676px;top:556px;width:67px;letter-spacing:0">10</div>
<div class="c" style="left:813px;top:556px;width:220px;color:#a0a0a0">Не определено</div>
<div class="c" style="left:1230px;top:556px;width:221px;color:#a0a0a0">Не определено</div>
<div class="c" style="left:1452px;top:556px;width:184px;color:#a0a0a0">Не определено</div>
</body></html>
